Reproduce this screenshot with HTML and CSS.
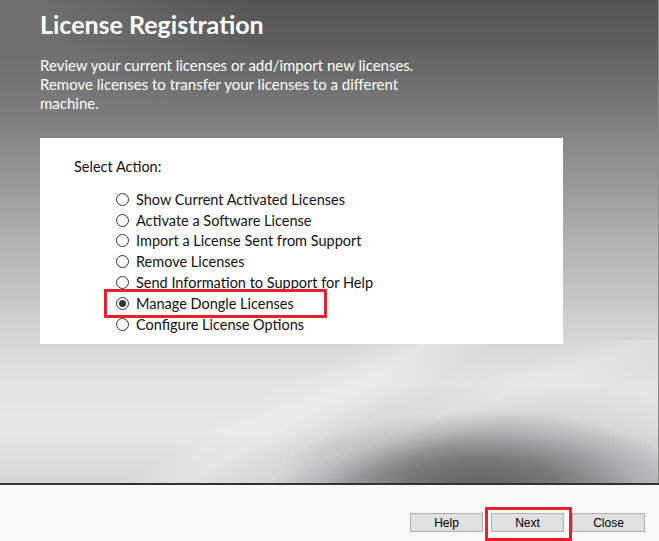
FILE: index.html
```html
<!DOCTYPE html>
<html>
<head>
<meta charset="utf-8">
<link rel="stylesheet" href="styles.css">
</head>
<body>
<div class="window">
  <section class="hero">
    <div class="swoosh"></div>
    <h1 class="title">License Registration</h1>
    <p class="desc">Review your current licenses or add/import new licenses.<br>Remove licenses to transfer your licenses to a different<br>machine.</p>
    <div class="panel">
      <div class="panel-label">Select Action:</div>
      <ul class="options">
        <li class="option"><span class="radio"></span><span>Show Current Activated Licenses</span></li>
        <li class="option"><span class="radio"></span><span>Activate a Software License</span></li>
        <li class="option"><span class="radio"></span><span>Import a License Sent from Support</span></li>
        <li class="option"><span class="radio"></span><span>Remove Licenses</span></li>
        <li class="option"><span class="radio"></span><span>Send Information to Support for Help</span></li>
        <li class="option highlighted"><span class="radio checked"></span><span>Manage Dongle Licenses</span><span class="mark mark-row"></span></li>
        <li class="option"><span class="radio"></span><span>Configure License Options</span></li>
      </ul>
    </div>
  </section>
  <footer class="footer">
    <button class="btn">Help</button>
    <button class="btn highlighted">Next<span class="mark mark-btn"></span></button>
    <button class="btn">Close</button>
  </footer>
</div>
</body>
</html>
```
FILE: styles.css
```css
html, body {
  margin: 0;
  padding: 0;
}
body {
  width: 659px;
  height: 541px;
  overflow: hidden;
  font-family: Lato, "Open Sans", sans-serif;
}
.window {
  display: flex;
  flex-direction: column;
  width: 659px;
  height: 541px;
}
.hero {
  position: relative;
  height: 483px;
  box-sizing: border-box;
  padding: 9px 0 0 40px;
  overflow: hidden;
  border-right: 1px solid #8c8c8c;
  background:
    radial-gradient(ellipse 260px 140px at 0% 0%, rgba(140,140,140,0.55), rgba(140,140,140,0) 100%),
    linear-gradient(to bottom, #545454 0px, #5e5e5e 40px, #7a7a7a 110px, #939393 170px, #b4b4b4 250px, #cfcfcf 320px, #e2e2e2 380px, #e6e7e8 430px, #d4d6d9 483px);
}
.swoosh {
  position: absolute;
  left: 0;
  top: 340px;
  width: 659px;
  height: 143px;
  background:
    radial-gradient(ellipse 210px 80px at 480px 150px, rgba(92,92,94,0.95) 0%, rgba(110,111,113,0.85) 40%, rgba(150,152,155,0.5) 75%, rgba(200,202,205,0) 100%),
    radial-gradient(ellipse 310px 110px at 490px 150px, rgba(140,142,146,0.6) 0%, rgba(170,172,176,0.35) 60%, rgba(200,202,205,0) 100%);
}
.hero::after {
  content: "";
  position: absolute;
  left: 0;
  top: 340px;
  width: 659px;
  height: 143px;
  background:
    linear-gradient(150deg, rgba(255,255,255,0) 40%, rgba(255,255,255,0.3) 48%, rgba(255,255,255,0) 56%),
    linear-gradient(160deg, rgba(255,255,255,0) 55%, rgba(255,255,255,0.2) 62%, rgba(255,255,255,0) 70%);
  pointer-events: none;
}
.title {
  position: relative;
  margin: 0;
  font-size: 25px;
  line-height: 30px;
  font-weight: 700;
  color: #fff;
}
.desc {
  position: relative;
  margin: 17px 0 0;
  font-size: 15px;
  line-height: 19px;
  color: #fff;
}
.panel {
  position: relative;
  z-index: 1;
  margin-top: 25px;
  width: 523px;
  height: 206px;
  box-sizing: border-box;
  background: #fff;
  padding: 20px 0 0 34px;
}
.panel-label {
  font-size: 14.5px;
  line-height: 18px;
  color: #111;
}
.options {
  list-style: none;
  margin: 13px 0 0 42px;
  padding: 0;
}
.option {
  position: relative;
  display: flex;
  align-items: center;
  gap: 7px;
  height: 20.8px;
  font-size: 14.5px;
  color: #111;
}
.radio {
  position: relative;
  width: 11px;
  height: 11px;
  border: 1px solid #333;
  border-radius: 50%;
  background: #fff;
  flex: none;
}
.radio.checked::after {
  content: "";
  position: absolute;
  left: 2px;
  top: 2px;
  width: 7px;
  height: 7px;
  border-radius: 50%;
  background: #333;
}
.highlighted {
  position: relative;
}
.mark {
  position: absolute;
  border: 3px solid #e8202a;
  box-sizing: border-box;
  pointer-events: none;
}
.mark-row {
  left: -12px;
  top: -4px;
  width: 223px;
  height: 29px;
}
.footer {
  flex: 1;
  border-top: 2px solid #333;
  background: #fafafa;
  display: flex;
  justify-content: flex-end;
  align-items: flex-end;
  gap: 8px;
  padding: 0 14px 9px 0;
}
.btn {
  width: 73px;
  height: 19px;
  padding: 0;
  border: 1px solid #adadad;
  background: #e1e1e1;
  font-family: "Liberation Sans", Arial, sans-serif;
  font-size: 12px;
  color: #000;
}
.mark-btn {
  left: -7px;
  top: -7px;
  width: 87px;
  height: 34px;
}
```
